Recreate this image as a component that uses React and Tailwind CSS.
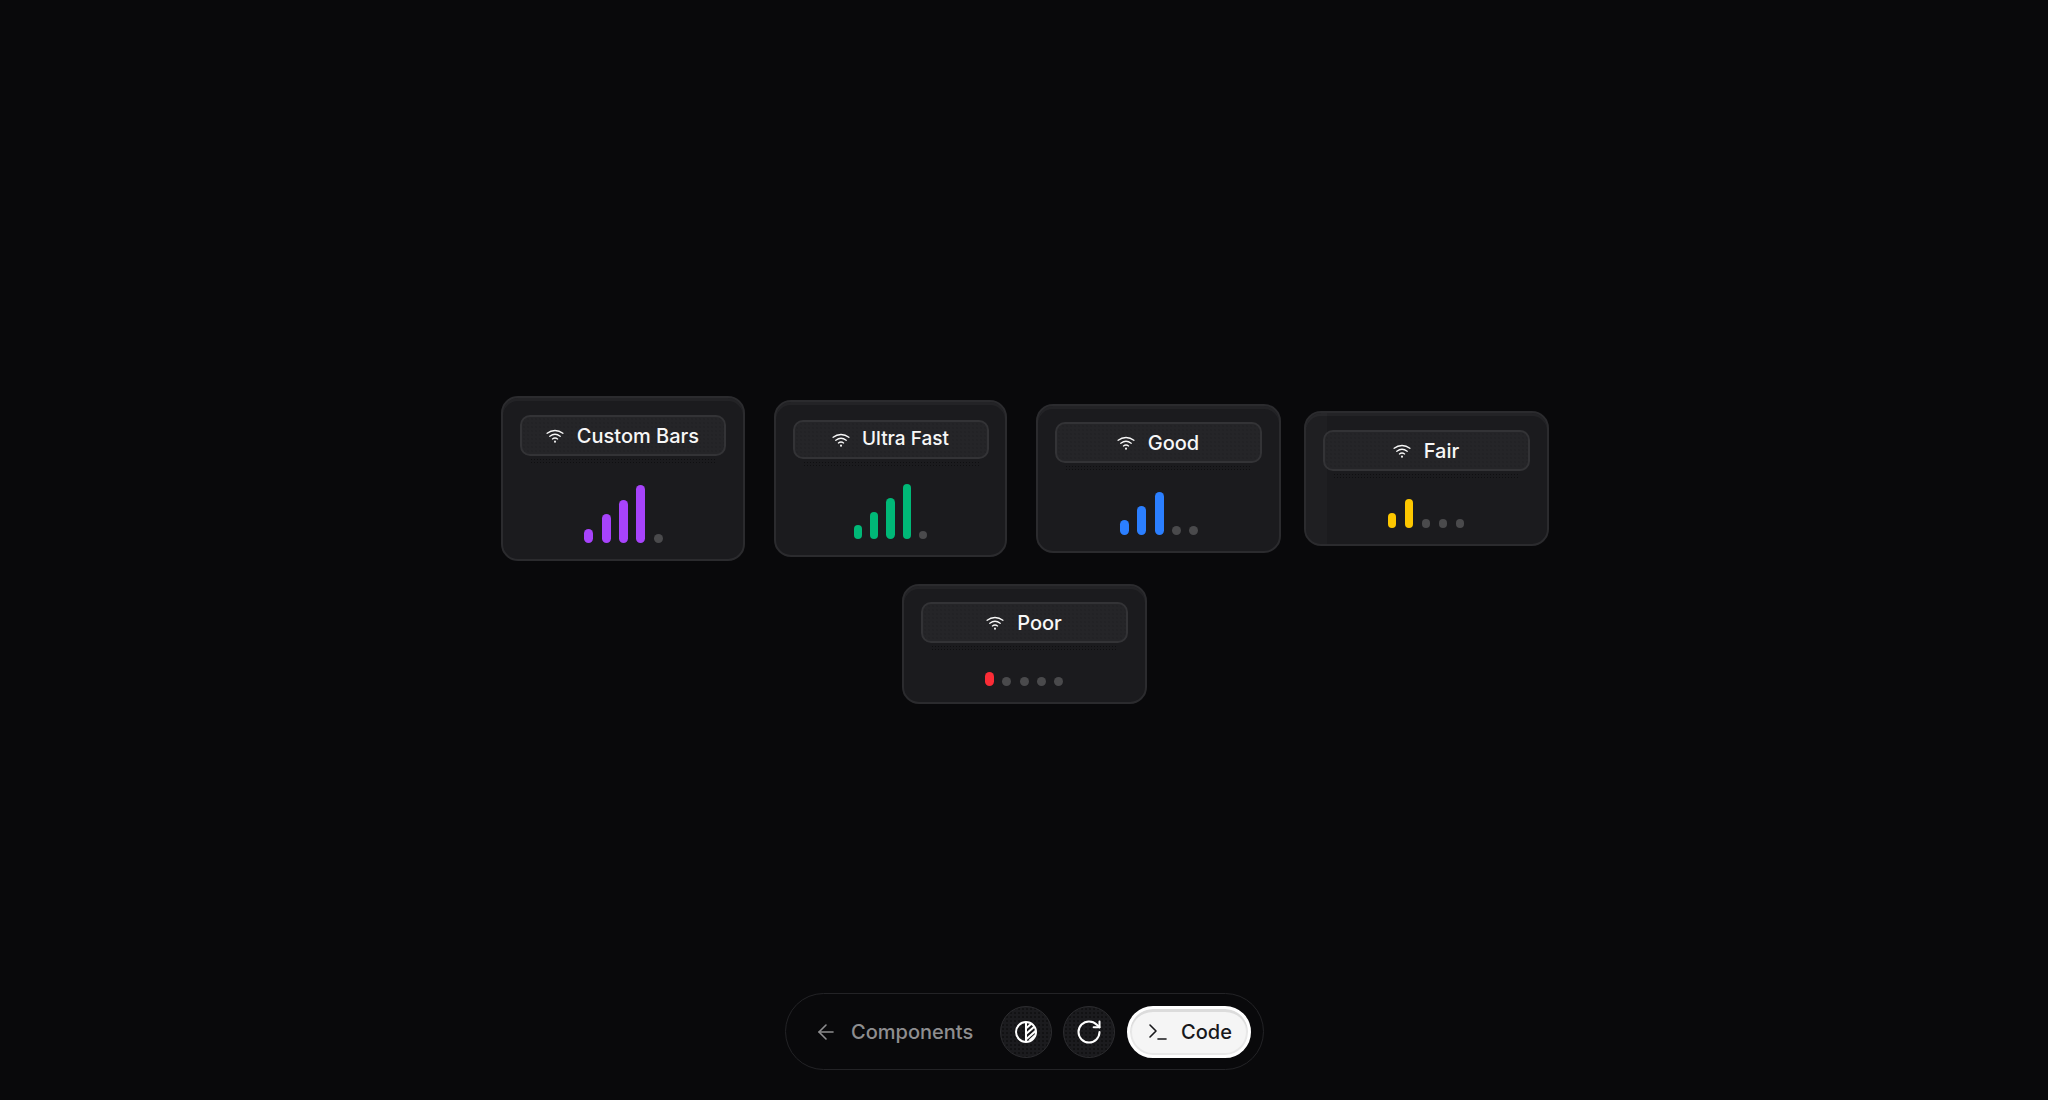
import React from 'react';
import { ArrowLeft, RotateCw, Terminal } from 'lucide-react';

const font = { fontFamily: 'Inter, sans-serif' };

const cards = [
  { label: 'Custom Bars', color: 'bg-[#a743fb]', box: 'w-[244px] h-[165px] pt-[17px] px-[17px]', head: 'h-[41px] text-[20px] gap-[13px]', gap: 'gap-[8.4px]', w: 'w-[9px]', dot: 'h-[9px]', stage: 'h-[59px] mt-[28px] translate-x-[1px]', active: [14, 29, 43, 58], margin: 'ml-[1px] mr-[29px]' },
  { label: 'Ultra Fast', color: 'bg-[#00b877]', box: 'w-[233px] h-[157px] pt-[18px] pl-[17px] pr-[16px]', head: 'h-[39px] text-[19px] gap-[12px]', gap: 'gap-[8px]', w: 'w-[8.4px]', dot: 'h-[8.4px]', stage: 'h-[55px] mt-[25px]', active: [14, 27, 41, 55], margin: 'mr-[29px]' },
  { label: 'Good', color: 'bg-[#2b7fff]', box: 'w-[245px] h-[149px] pt-[16px] px-[17px]', head: 'h-[41px] text-[20px] gap-[13px]', gap: 'gap-[8.4px]', w: 'w-[9px]', dot: 'h-[9px]', stage: 'h-[43px] mt-[29px] translate-x-[1px]', active: [15, 29, 43], margin: 'mr-[23px]' },
  { label: 'Fair', color: 'bg-[#fdc700]', box: 'w-[245px] h-[135px] pt-[17px] px-[17px]', head: 'h-[41px] text-[20px] gap-[13px]', gap: 'gap-[8.4px]', w: 'w-[8.6px]', dot: 'h-[8.6px]', stage: 'h-[29px] mt-[28px]', active: [15, 29], margin: '', strip: true },
];

const poor = { label: 'Poor', color: 'bg-[#fb2c36]', box: 'w-[245px] h-[120px] pt-[16px] px-[17px]', head: 'h-[41px] text-[20px] gap-[13px]', gap: 'gap-[8.4px]', w: 'w-[9px]', dot: 'h-[9px]', stage: 'h-[15px] mt-[28px]', active: [14], margin: '' };

const WifiIcon = () => (
  <svg width="18" height="18" viewBox="0 0 16 16" fill="none" stroke="currentColor" strokeWidth="1.2" strokeLinecap="round" className="shrink-0">
    <path d="M1 5.6c4.2-3.3 9.8-3.3 14 0" />
    <path d="M3.4 8.2c2.8-2.1 6.4-2.1 9.2 0" />
    <path d="M5.7 10.6c1.4-1 3.2-1 4.6 0" />
    <circle cx="8" cy="13" r=".9" fill="currentColor" stroke="none" />
  </svg>
);

const ContrastIcon = () => (
  <svg width="24" height="24" viewBox="0 0 24 24" fill="none" stroke="#fff" strokeWidth="2">
    <circle cx="12" cy="12" r="10" />
    <path d="M12 2v20" />
    <path d="M12.5 8 17.5 3.5M12.5 13.5 20.5 6.5M12.5 19 21.5 11M15.5 20.5 21 15.5" strokeWidth="2.1" />
  </svg>
);

const Signal = ({ card }) => (
  <div className={`relative flex items-end justify-center ${card.gap} ${card.stage}`}>
    {Array.from({ length: 5 }).map((_, i) => {
      const h = card.active[i];
      return h ? (
        <div key={i} className={`${card.w} rounded-full ${card.color}`} style={{ height: h }} />
      ) : (
        <div key={i} className={`${card.w} ${card.dot} rounded-full bg-[#4a4a4c]`} />
      );
    })}
  </div>
);

const Card = ({ card }) => (
  <div className={`relative shrink-0 overflow-hidden rounded-[17px] border-2 border-[#2b2b2e] bg-[#1b1b1e] shadow-[inset_0_3px_0_#232326] ${card.box} ${card.margin}`}>
    {card.strip && <div className="absolute inset-y-0 left-0 w-[21px] bg-white/[0.02]" />}
    <div className={`relative flex items-center justify-center rounded-[10px] border-2 border-[#333336] bg-[#252528] bg-[radial-gradient(#222225_0.7px,transparent_0.8px)] bg-[length:4px_4px] font-[450] text-[#f7f7f7] ${card.head}`}>
      <WifiIcon />
      <span>{card.label}</span>
      <div className="absolute inset-x-[8px] top-full mt-[4px] h-[5px] bg-[radial-gradient(#0f0f11_0.6px,transparent_0.7px)] bg-[length:3px_3px]" />
    </div>
    <Signal card={card} />
  </div>
);

const circle = 'flex h-[52px] w-[52px] items-center justify-center rounded-full border border-[#2c2c2f] bg-[#1b1b1e] bg-[radial-gradient(#111113_0.7px,transparent_0.8px)] bg-[length:4px_4px]';

export default function App() {
  return (
    <div style={font} className="relative flex h-[1100px] w-full flex-col items-center justify-center gap-[23px] overflow-hidden bg-[#09090b]">
      <div className="flex items-center justify-center">
        {cards.map((c) => <Card key={c.label} card={c} />)}
      </div>
      <Card card={poor} />

      <div className="absolute bottom-[30px] left-[785px] flex h-[77px] w-[479px] items-center rounded-full border border-[#232326] pl-[28px] pr-[12px]">
        <ArrowLeft size={24} strokeWidth={1.6} className="text-[#8e8e90]" />
        <span className="ml-[13px] text-[20px] font-[450] text-[#8e8e90]">Components</span>
        <div className="ml-auto flex items-center gap-[11px]">
          <button className={circle}><ContrastIcon /></button>
          <button className={`${circle} mr-[1px]`}><RotateCw size={28} strokeWidth={1.75} className="text-white" /></button>
          <button className="flex h-[52px] w-[124px] items-center justify-center gap-[11px] rounded-full border-[3px] border-white bg-[#f5f5f5] text-[20px] font-[450] text-[#18181b] shadow-[inset_0_3px_0_#dcdcdc,inset_0_0_0_2px_#e8e8e8]">
            <Terminal size={24} strokeWidth={1.6} />
            <span>Code</span>
          </button>
        </div>
      </div>
    </div>
  );
}
